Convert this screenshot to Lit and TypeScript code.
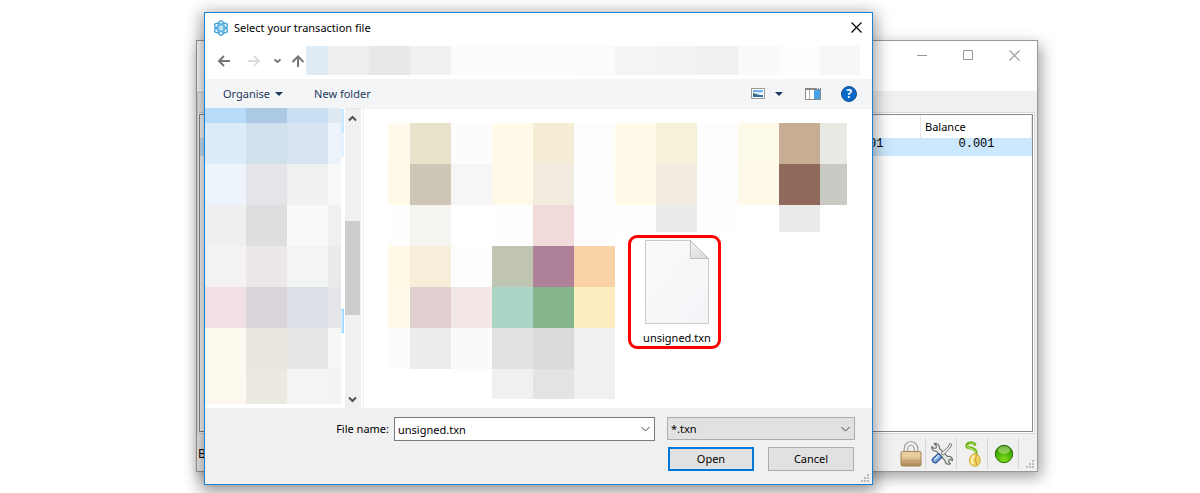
import { LitElement, html, css, svg } from "lit";
import { customElement } from "lit/decorators.js";

const ADDRESS = ["#dfecf6", "#edeff1", "#e8e8e8", "#f0f0f0", "#fcfcfc", "#fcfcfc", "#fcfcfc", "#fbfbfb", "#f5f5f5", "#f3f3f3", "#f0f0f0", "#f9f9f9", "#fdfdfd", "#f7f7f7"];

const PLACES = [
  ["#b8dcf8", "#abc9e2", "#c8dff4", "#dfe9f2"],
  ["#daebf9", "#d1e0ed", "#d7e4ef", "#edf3fb"],
  ["#edf4fc", "#e3e5e9", "#f1f1f1", "#f9f9f9"],
  ["#edeff0", "#dedede", "#f8faf9", "#f0f0f0"],
  ["#f3f1f3", "#ece8e7", "#f3f5f5", "#eaeaea"],
  ["#f0dfe5", "#dbd5db", "#dbe0e8", "#e4e6ea"],
  ["#fcfaef", "#e8e5df", "#e6e7e9", "#f6f8f8"],
  ["#fdf9ef", "#ece8e2", "#f5f5f5", "#f3f3f3"],
];

const N = "transparent";
const FILES = [
  ["#fffaeb", "#e8e2cb", "#fcfcfc", "#fffaea", "#f5edd6", "#fdfdfd", "#fffaea", "#f7f1da", "#fdfdfd", "#fdfaea", "#c7ad94", "#e8eae4"],
  ["#fff9e7", "#cec6b7", "#f6f6f6", "#fff9ea", "#f2ebe0", "#fdfdfd", "#fff9e8", "#f3ebdf", "#fdfdfd", "#fff9ea", "#8f695b", "#c9cac4"],
  ["#fefefe", "#f5f4f0", N, "#fefefe", "#f0dbda", "#fefefe", "#fdfdfd", "#ebebeb", "#fefefe", N, "#ebebeb", N],
  ["#fff9e6", "#f7eeda", "#fdfdfd", "#c0c4b3", "#af8199", "#f9d3a6", N, N, N, N, N, N],
  ["#fff9ec", "#e2cfcf", "#f4e7e7", "#abd6c6", "#84b58b", "#feedc1", N, N, N, N, N, N],
  ["#fbfbfb", "#ececec", "#fafafa", "#e1e1e1", "#dbdbdb", "#f0f0f0", N, N, N, N, N, N],
  [N, N, N, "#f0f0f0", "#e3e3e3", "#f0f0f0", N, N, N, N, N, N],
];

const cell = (color: string) => html`<span style="background:${color}"></span>`;

const chevron = (d: string, color: string, w = 2) =>
  svg`<path d=${d} fill="none" stroke=${color} stroke-width=${w} />`;

const grip = html`<svg class="grip" width="8" height="8" viewBox="0 0 8 8" fill="#bcbcbc" aria-hidden="true">
  <path d="M6 0h2v2h-2zM3 3h2v2h-2zM6 3h2v2h-2zM0 6h2v2h-2zM3 6h2v2h-2zM6 6h2v2h-2z" />
</svg>`;

const base = css`
  * { box-sizing: border-box; }
  :host { display: block; font: 11px/16px "Noto Sans", "Open Sans", sans-serif; color: #000; }
  button, input, select { font: inherit; color: inherit; margin: 0; }
  svg { display: block; flex: none; }
  .plain { border: 0; background: none; padding: 0; display: flex; align-items: center; justify-content: center; }
`;

@customElement("wallet-window")
class WalletWindow extends LitElement {
  static styles = [base, css`
    .window { border: 1px solid #999; background: #f0f0f0; box-shadow: 3px 5px 14px rgba(0, 0, 0, .38); }
    .caption { height: 50px; background: #fff; display: flex; justify-content: flex-end; }
    .caption button { width: 46px; height: 28px; }
    .tabs { height: 21px; display: flex; align-items: flex-end; }
    .tab { width: 60px; height: 20px; border: 1px solid #d9d9d9; border-bottom: 0; }
    .page { border: 1px solid #d9d9d9; background: #fff; margin-right: 2px; padding: 1px; }
    .frame { border: 1px solid #828790; background: #fff; min-height: 318px; }
    table { width: 100%; border-collapse: collapse; table-layout: fixed; }
    th { height: 23px; padding: 0 4px; font-weight: 400; text-align: left; border-right: 1px solid #e5e5e5; }
    th:last-child { width: 111px; }
    td { height: 18px; padding: 0 37px 6px 0; text-align: right; background: #cce8ff; font: 12px/12px "Liberation Mono", monospace; }
    .status { height: 37px; padding: 4px 0 2px; display: flex; align-items: stretch; }
    .status p { margin: 0 auto 0 0; align-self: center; padding-left: 1px; font-size: 12px; }
    .status button { width: 31px; padding-left: 2px; border-right: 1px solid #d7d7d7; }
    .grip { align-self: flex-end; margin: 0 3px 1px 7px; }
  `];

  render() {
    return html`<section class="window" aria-label="Wallet">
      <div class="caption">
        <button class="plain" aria-label="Minimise"><svg width="10" height="10"><path d="M0 5.500h10" stroke="#999" /></svg></button>
        <button class="plain" aria-label="Maximise"><svg width="10" height="10"><path d="M.5.5h9v9h-9z" fill="none" stroke="#999" /></svg></button>
        <button class="plain" aria-label="Close"><svg width="11" height="11"><path d="M.5.5l10 10M10.500.5l-10 10" stroke="#999" stroke-width="1.200" /></svg></button>
      </div>
      <div class="tabs"><div class="tab"></div></div>
      <div class="page"><div class="frame">
        <table>
          <thead><tr><th scope="col"></th><th scope="col">Balance</th></tr></thead>
          <tbody><tr><td>0.001</td><td>0.001</td></tr></tbody>
        </table>
      </div></div>
      <div class="status">
        <p>Balance</p>
        <button class="plain" aria-label="Password"><svg width="22" height="26" viewBox="0 0 22 26">
          <defs><linearGradient id="brass" x2="0" y2="1"><stop stop-color="#c9a878" /><stop offset=".25" stop-color="#ecd3a4" /><stop offset=".7" stop-color="#c9a676" /><stop offset="1" stop-color="#a88354" /></linearGradient></defs>
          <path d="M6 12V7.500a5 5 0 0 1 10 0V12" fill="none" stroke="#8f8f8f" stroke-width="4.600" />
          <path d="M6 12V7.500a5 5 0 0 1 10 0V12" fill="none" stroke="#ececec" stroke-width="2.800" />
          <rect x="1" y="10.500" width="20" height="14.500" rx="1.500" fill="url(#brass)" stroke="#a58556" />
          <path d="M2 12h18" stroke="#f5e2bd" /><path d="M2 22h18M2 19.500h18" stroke="#a98455" stroke-opacity=".35" />
        </svg></button>
        <button class="plain" aria-label="Preferences"><svg width="22" height="23" viewBox="0 0 22 23" stroke-linejoin="round">
          <path d="M3 1.500l2.500 2.500-.5 2-2 .5L.8 4.500c-.4 3 1.500 5 4.400 4.600L14 18.500c0 2.800 2.500 4.600 5.500 3.300l-2-2.200.5-1.800 2-.5 1.500 1.400c.2-3-2-4.800-5-4.200L8.500 6.300C8.600 3 6 .8 3 1.500z" fill="#e9ebe8" stroke="#70756f" stroke-width="1.200" />
          <path d="M19 1.200l1.800 1.500-2.300 4-6.500 6.500-2-2L17 5z" fill="#f0f0ee" stroke="#70756f" />
          <path d="M7.500 11.500l3.500 3.500-5.500 5.500c-1.800 1.500-5.500-1.500-3.800-3.800z" fill="#7eaae2" stroke="#2b5596" stroke-width="1.200" /><path d="M3.500 17.500l4.500-4.500" stroke="#cfe1f8" stroke-width="1.500" />
        </svg></button>
        <button class="plain" aria-label="Seed"><svg width="16" height="26" viewBox="0 0 16 26">
          <path d="M9.500 15c2.800-3 2-6-2-7.500C4 6 1.800 7.500 1.800 5c0-3.200 5.500-4.300 8-1.500" fill="none" stroke="#72b81f" stroke-width="3" stroke-linecap="round" />
          <path d="M9.500 14c2-2.800 1-4.600-2-5.800C4 6.800 2 6.500 2.500 4.800c1-2 4.500-2.400 6.500-1.100" fill="none" stroke="#c4ec78" />
          <path d="M10 12.500c6 1 7 10 2 12.500-4.500 1-8-2-7.500-6 .3-3.300 2.500-6 5.500-6.500z" fill="#f0d05e" stroke="#cfa53a" />
          <path d="M9.500 15c-2.800 2-3.500 5-1.500 8" fill="none" stroke="#fff3ad" stroke-width="2.200" /><path d="M11.500 14c-1.500 3-1 7 .5 10" fill="none" stroke="#c69b32" />
        </svg></button>
        <button class="plain" aria-label="Network"><svg width="20" height="20" viewBox="0 0 20 20">
          <defs><radialGradient id="led" cx=".5" cy=".85" r=".8"><stop stop-color="#7ddd1c" /><stop offset=".6" stop-color="#4fb307" /><stop offset="1" stop-color="#2f8a00" /></radialGradient></defs>
          <circle cx="10" cy="10" r="8.700" fill="url(#led)" stroke="#2f6d10" />
          <ellipse cx="10" cy="6" rx="6" ry="3.800" fill="#d5f5b0" fill-opacity=".45" />
        </svg></button>
        ${grip}
      </div>
    </section>`;
  }
}

@customElement("file-dialog")
class FileDialog extends LitElement {
  static styles = [base, css`
    .dialog { position: relative; border: 1px solid #1883d7; background: #fff; box-shadow: 0 4px 15px 3px rgba(0, 0, 0, .38); }
    .title { height: 33px; padding: 0 5px 4px 8px; display: flex; align-items: center; gap: 5px; }
    h1 { margin: 0; flex: 1; font-size: 11px; font-weight: 400; }
    .title button { width: 22px; height: 22px; }
    .nav { height: 33px; padding: 0 12px 4px; display: flex; align-items: stretch; }
    .nav button { width: 30px; justify-content: flex-start; }
    .nav .recent { width: 14px; margin-left: -5px; }
    .nav .up { width: 20px; padding-left: 5px; }
    .address { flex: 1; display: grid; grid-template-columns: 22fr repeat(12, 41fr) 40fr; }
    .tools { height: 29px; padding: 0 15px 0 18px; display: flex; align-items: center; background: #f4f5f7; color: #1e395b; }
    .tools .plain { gap: 5px; }
    .new { margin: 0 auto 0 31px; }
    .views { margin-right: 22px; }
    .tools .views { gap: 10px; }
    .preview { margin-right: 20px; }
    .help { width: 16px; height: 16px; padding: 0; border: 1px solid #17508f; border-radius: 50%; background: #0a68c8; color: #fff; font-size: 12px; line-height: 14px; font-weight: 700; text-align: center; }
    .body { display: flex; height: 300px; }
    .places { display: grid; grid-template: 15px repeat(6, 41px) 35px / 41px 41px 41px 13px; }
    .rows { width: 4px; display: flex; flex-direction: column; padding-top: 1px; }
    .rows span { width: 3px; height: 24px; background: #cce8ff; }
    .rows .soft { background: #e5f3ff; }
    .rows .current { margin-top: 152px; border: 1px solid #99d1ff; border-left: 0; }
    .scroll { width: 16px; background: #f0f0f0; display: flex; flex-direction: column; align-items: center; padding: 6px 1px 5px 0; border-top: 1px solid #e5e8ea; }
    .thumb { width: 15px; height: 94px; margin: 99px 0 auto; background: #cdcdcd; }
    .files { flex: 1; margin-left: 2px; border: 1px solid #f0f0f0; border-width: 1px 0 0 1px; padding: 14px 0 0 24px; display: grid; align-content: start; grid-template: repeat(6, 41px) 30px / 22px repeat(10, 41px) 27px; }
    .files .short { height: 27px; }
    .file { grid-area: 3 / 7 / 7 / 11; width: 93px; height: 114px; margin: 30px 0 0 13px; padding: 2px 0 0 5px; border: 3px solid #f00; border-radius: 9px; background: none; display: flex; flex-direction: column; align-items: center; gap: 6px; }
    form { background: #f0f0f0; padding: 9px 17px 13px 0; margin: 0; }
    .line { display: flex; }
    .line label { width: 184px; padding-top: 4px; margin-right: 5px; text-align: right; }
    .combo { flex: 1; height: 24px; margin-right: 12px; display: flex; border: 1px solid #7a7a7a; background: #fff; }
    .combo input { flex: 1; min-width: 0; border: 0; outline: 0; padding: 2px 3px 0; background: none; }
    .combo button { width: 17px; }
    .kind { width: 188px; height: 23px; display: grid; align-items: center; border: 1px solid #adadad; background: #e1e1e1; }
    .kind select { grid-area: 1 / 1; width: 100%; height: 100%; appearance: none; border: 0; background: none; padding: 0 3px; }
    .kind svg { grid-area: 1 / 1; justify-self: end; margin-right: 4px; pointer-events: none; }
    .actions { justify-content: flex-end; gap: 14px; padding: 6px 1px 0 0; }
    .actions button { width: 86px; height: 24px; padding: 0; border: 1px solid #adadad; background: #e1e1e1; }
    .actions .main { border: 2px solid #0078d7; }
    .grip { position: absolute; right: 3px; bottom: 2px; }
  `];

  render() {
    const drop = svg`<path d="M0 0h8l-4 4z" fill="#1e395b" />`;
    return html`<section class="dialog" role="dialog" aria-labelledby="title">
      <div class="title">
        <svg width="16" height="16" viewBox="0 0 16 16" fill="none" stroke="#46a6dc" stroke-width="1.300">
          <ellipse cx="8" cy="8" rx="7.300" ry="3.200" transform="rotate(30 8 8)" /><ellipse cx="8" cy="8" rx="7.300" ry="3.200" transform="rotate(90 8 8)" /><ellipse cx="8" cy="8" rx="7.300" ry="3.200" transform="rotate(150 8 8)" />
          <circle cx="8" cy="8" r="6.500" stroke-opacity=".5" stroke-width="1" /><circle cx="8" cy="8" r="3" fill="#8ccbeb" stroke="#70bce4" /><path d="M7 6.500h2v3h-2z" stroke="#fff" stroke-width=".8" />
        </svg>
        <h1 id="title">Select your transaction file</h1>
        <button class="plain" aria-label="Close"><svg width="11" height="11"><path d="M.5.5l10 10M10.500.5l-10 10" stroke="#000" stroke-width="1.200" /></svg></button>
      </div>
      <div class="nav">
        <button class="plain" aria-label="Back"><svg width="14" height="12">${chevron("M13 6H2M7 1L2 6l5 5", "#767676")}</svg></button>
        <button class="plain" aria-label="Forward"><svg width="14" height="12">${chevron("M1 6h11M7 1l5 5-5 5", "#dedede")}</svg></button>
        <button class="plain recent" aria-label="Recent locations"><svg width="10" height="6">${chevron("M2.500 1.500l3 2.500 3-2.500", "#767676")}</svg></button>
        <button class="plain up" aria-label="Up one level"><svg width="14" height="12">${chevron("M7 12V2M1.500 7L7 1.500 12.500 7", "#767676")}</svg></button>
        <div class="address">${ADDRESS.map(cell)}</div>
      </div>
      <div class="tools">
        <button class="plain">Organise <svg width="8" height="4">${drop}</svg></button>
        <button class="plain new">New folder</button>
        <button class="plain views" aria-label="Change view">
          <svg width="14" height="11"><path d="M.5.5h13v10h-13z" fill="#fff" stroke="#999" /><path d="M2 2h10v3H2z" fill="#74adf0" /><path d="M2 4h10v2H2z" fill="#d4e9fb" /><path d="M2 5.500l3 .5 4 1h3v2H2z" fill="#356c91" /><path d="M2 5l4 2H2z" fill="#3c6a4a" /></svg>
          <svg width="8" height="4">${drop}</svg>
        </button>
        <button class="plain preview" aria-label="Preview pane">
          <svg width="16" height="12"><path d="M.5.5h15v11h-15z" fill="#fff" stroke="#888" /><path d="M0 0h16v2H0z" fill="#888" /><path d="M4.500 2v9" stroke="#aaa" /><path d="M9 2h6v9H9z" fill="#45a0e6" /><path d="M12 .5h1M14 .5h1" stroke="#fff" /></svg>
        </button>
        <button class="help" aria-label="Help">?</button>
      </div>
      <div class="body">
        <div class="places">${PLACES.flat().map(cell)}</div>
        <div class="rows"><span></span><span class="soft"></span><span class="current"></span></div>
        <div class="scroll">
          <svg width="9" height="7">${chevron("M1 5.500l3.500-3.500L8 5.500", "#505050")}</svg>
          <div class="thumb"></div>
          <svg width="9" height="7">${chevron("M1 1.500L4.500 5 8 1.500", "#505050")}</svg>
        </div>
        <div class="files">
          ${FILES.map((row, r) => row.map((color, c) => html`<span class=${r === 2 && c > 5 ? "short" : ""} style="background:${color};grid-area:${r + 1}/${c + 1}"></span>`))}
          <button class="file">
            <svg width="64" height="84" viewBox="0 0 64 84">
              <defs><linearGradient id="paper" x2="1" y2="1"><stop stop-color="#f9fafa" /><stop offset="1" stop-color="#f3f5f8" /></linearGradient>
              <linearGradient id="fold" x2="1" y2="1"><stop stop-color="#f4f4f4" /><stop offset="1" stop-color="#d6d6d6" /></linearGradient></defs>
              <path d="M.5.5h45l18 18v65H.5z" fill="url(#paper)" stroke="#c9c9c9" />
              <path d="M45.500.5v18h18z" fill="url(#fold)" stroke="#bdbdbd" />
            </svg>
            <span>unsigned.txn</span>
          </button>
        </div>
      </div>
      <form @submit=${(e: Event) => e.preventDefault()}>
        <div class="line">
          <label for="name">File name:</label>
          <div class="combo">
            <input id="name" type="text" value="unsigned.txn" />
            <button class="plain" type="button" aria-label="Previous names"><svg width="9" height="6">${chevron("M.5 1l4 4 4-4", "#444", 1)}</svg></button>
          </div>
          <div class="kind">
            <select aria-label="File type"><option>*.txn</option></select>
            <svg width="9" height="6">${chevron("M.5 1l4 4 4-4", "#444", 1)}</svg>
          </div>
        </div>
        <div class="line actions">
          <button class="main" type="submit">Open</button>
          <button type="button">Cancel</button>
        </div>
      </form>
      ${grip}
    </section>`;
  }
}

@customElement("app-root")
class AppRoot extends LitElement {
  static styles = css`
    :host { display: block; position: relative; min-height: 100vh; overflow: hidden; background: #fff; }
    wallet-window { position: absolute; top: 40px; left: 196px; right: 162px; }
    file-dialog { position: absolute; top: 12px; left: 204px; right: 327px; }
  `;

  render() {
    return html`<wallet-window></wallet-window><file-dialog></file-dialog>`;
  }
}
